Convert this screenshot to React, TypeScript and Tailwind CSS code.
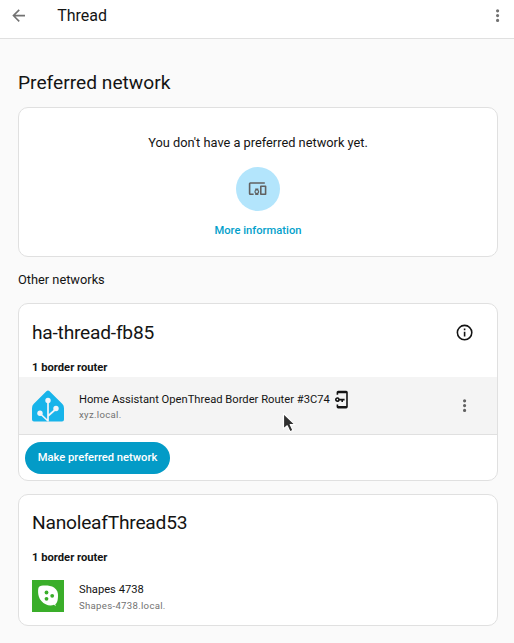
import type { ReactNode } from "react";

const PATHS = {
  back: "M20,11V13H8L13.5,18.5L12.08,19.92L4.16,12L12.08,4.08L13.5,5.5L8,11H20Z",
  dots: "M12,16A2,2 0 0,1 14,18A2,2 0 0,1 12,20A2,2 0 0,1 10,18A2,2 0 0,1 12,16M12,10A2,2 0 0,1 14,12A2,2 0 0,1 12,14A2,2 0 0,1 10,12A2,2 0 0,1 12,10M12,4A2,2 0 0,1 14,6A2,2 0 0,1 12,8A2,2 0 0,1 10,6A2,2 0 0,1 12,4Z",
  info: "M11,9H13V7H11M12,20C7.59,20 4,16.41 4,12C4,7.59 7.59,4 12,4C16.41,4 20,7.59 20,12C20,16.41 16.41,20 12,20M12,2A10,10 0 0,0 2,12A10,10 0 0,0 12,22A10,10 0 0,0 22,12A10,10 0 0,0 12,2M11,17H13V11H11V17Z",
  devices:
    "M3 6H21V4H3C1.9 4 1 4.9 1 6V18C1 19.1 1.9 20 3 20H7V18H3V6M13 12H9V13.78C8.39 14.33 8 15.11 8 16C8 16.89 8.39 17.67 9 18.22V20H13V18.22C13.61 17.67 14 16.88 14 16S13.61 14.33 13 13.78V12M11 17.5C10.17 17.5 9.5 16.83 9.5 16S10.17 14.5 11 14.5 12.5 15.17 12.5 16 11.83 17.5 11 17.5M22 8H16C15.5 8 15 8.5 15 9V19C15 19.5 15.5 20 16 20H22C22.5 20 23 19.5 23 19V9C23 8.5 22.5 8 22 8M21 18H17V10H21V18Z",
  phoneKey:
    "M19,1H9C7.9,1 7,1.9 7,3V6H9V4H19V20H9V18H7V21C7,22.1 7.9,23 9,23H19C20.1,23 21,22.1 21,21V3C21,1.9 20.1,1 19,1M10.8,11C10.4,9.8 9.3,9 8,9C6.3,9 5,10.3 5,12C5,13.7 6.3,15 8,15C9.3,15 10.4,14.2 10.8,13H13V15H15V13H17V11H10.8M8,13C7.4,13 7,12.6 7,12C7,11.4 7.4,11 8,11C8.6,11 9,11.4 9,12C9,12.6 8.6,13 8,13Z",
};

function Icon({ name, className = "" }: { name: keyof typeof PATHS; className?: string }) {
  return (
    <svg viewBox="0 0 24 24" fill="currentColor" className={`size-[19.2px] shrink-0 ${className}`}>
      <path d={PATHS[name]} />
    </svg>
  );
}

function HomeAssistantLogo() {
  return (
    <svg viewBox="0 0 32 32" className="size-8 shrink-0">
      <path
        d="M0 18.2Q0 15.6 1.6 14L14.4 1.2Q16 -.3 17.6 1.2L30.4 14Q32 15.6 32 18.2V29.5Q32 31.5 30 31.5H2Q0 31.5 0 29.5Z"
        fill="#18b4ea"
      />
      <g fill="none" stroke="#f2f4f9" strokeWidth="1.7">
        <path d="M16 31.5V10M16 31L7.5 23M16 26L24.5 18.5" />
      </g>
      <g fill="#f2f4f9">
        <circle cx="16" cy="10.5" r="2.7" />
        <circle cx="8" cy="23.2" r="2.7" />
        <circle cx="24" cy="18.5" r="2.7" />
      </g>
    </svg>
  );
}

function NanoleafLogo() {
  return (
    <svg viewBox="0 0 32 32" className="size-8 shrink-0">
      <path d="M0 0H32V32H0Z" fill="#3aae2a" />
      <path
        d="M6.3 8.5C6.8 6.3 8.5 5.6 11 5.5C15 5.2 19 5.6 22 7.5C25.4 9.8 26.3 13 26 16.5C25.8 19 25.7 21.6 24.4 23.3L23.3 24.2L23.8 26.2L22 24.8C19.5 25.9 16.5 25.8 13.7 24.3C10.5 22.7 7.8 20 6.8 16.5C6.1 14 5.9 10.8 6.3 8.5Z"
        fill="#fff"
      />
      <g fill="#3aae2a">
        <circle cx="14.5" cy="12.5" r="1.9" />
        <circle cx="20.2" cy="15.8" r="1.9" />
        <circle cx="14.5" cy="18.8" r="1.9" />
      </g>
    </svg>
  );
}

function Card({ className = "", children }: { className?: string; children: ReactNode }) {
  return (
    <section className={`rounded-[10px] border border-[#e0e0e0] bg-white ${className}`}>{children}</section>
  );
}

function RouterText({
  name,
  host,
  icon,
  hostClass = "",
}: {
  name: string;
  host: string;
  icon?: ReactNode;
  hostClass?: string;
}) {
  return (
    <div className="ml-[15px] h-[42px] min-w-0 flex-1 pt-[7px]">
      <div className="flex h-4 items-center text-[11.2px] leading-4">
        <span>{name}</span>
        {icon}
      </div>
      <div className={`text-[9.6px] leading-4 tracking-[0.3px] text-[#727272] ${hostClass}`}>{host}</div>
    </div>
  );
}

export default function App() {
  return (
    <div className="relative h-[643px] w-full overflow-hidden bg-[#fafafa] font-[Roboto,sans-serif] text-[#141414]">
      <header className="flex h-[39px] items-center border-b border-[#e0e0e0] bg-white pr-[7px] pb-[7px] pl-[9px]">
        <Icon name="back" className="text-[#727272]" />
        <h1 className="ml-[29px] flex-1 text-base leading-6">Thread</h1>
        <Icon name="dots" className="text-[#727272]" />
      </header>

      <main className="pr-4 pl-[18px]">
        <h2 className="pt-[30px] text-[19.2px] leading-[27px]">Preferred network</h2>
        <Card className="mt-[11px] flex h-[150px] flex-col items-center pt-[26px]">
          <p className="text-[12.8px] leading-[18px]">You don't have a preferred network yet.</p>
          <div className="mt-[15px] flex size-11 items-center justify-center rounded-full bg-[#b3e5fc] text-[#616161]">
            <Icon name="devices" />
          </div>
          <a className="mt-3 text-[11.2px] leading-4 font-medium text-[#039fcb]">More information</a>
        </Card>

        <h3 className="mt-[14px] text-[12.8px] leading-[18px]">Other networks</h3>

        <Card className="mt-[14px] flex h-[178px] flex-col">
          <div className="flex h-[56px] items-center justify-between pr-[23px] pl-[13px]">
            <h2 className="text-[19.2px] leading-[27px] tracking-[-0.012em]">ha-thread-fb85</h2>
            <Icon name="info" className="mt-[2px]" />
          </div>
          <h4 className="h-[17px] pl-[13px] text-[11.2px] leading-[15px] font-bold">1 border router</h4>
          <div className="flex h-[57px] items-center bg-[#f4f4f4] pr-[23px] pl-[13px]">
            <HomeAssistantLogo />
            <RouterText
              name="Home Assistant OpenThread Border Router #3C74"
              host="xyz.local."
              hostClass="-mt-px"
              icon={<Icon name="phoneKey" className="ml-px" />}
            />
            <Icon name="dots" className="text-[#616161]" />
          </div>
          <div className="border-t border-[#e0e0e0] px-1.5 pt-[7px]">
            <button className="h-8 w-[145px] rounded-full bg-[#039bc7] text-[11.2px] font-medium whitespace-nowrap text-white">
              Make preferred network
            </button>
          </div>
        </Card>

        <Card className="mt-[13px] flex h-[132px] flex-col">
          <div className="flex h-[55px] items-center pl-[13px]">
            <h2 className="text-[19.2px] leading-[27px] tracking-[-0.012em]">NanoleafThread53</h2>
          </div>
          <h4 className="h-[17px] pl-[13px] text-[11.2px] leading-[15px] font-bold">1 border router</h4>
          <div className="flex h-[57px] items-center pl-[13px]">
            <NanoleafLogo />
            <RouterText name="Shapes 4738" host="Shapes-4738.local." />
          </div>
        </Card>
      </main>

      <svg viewBox="0 0 16 22" className="absolute top-[412px] left-[281px] h-[22px] w-4">
        <path
          d="M2.5 1.5V17L6.2 13.8L9 19.8L12 18.4L9.2 12.6H14Z"
          fill="#303030"
          stroke="#fff"
          strokeWidth="1.2"
          strokeLinejoin="round"
        />
      </svg>
    </div>
  );
}
